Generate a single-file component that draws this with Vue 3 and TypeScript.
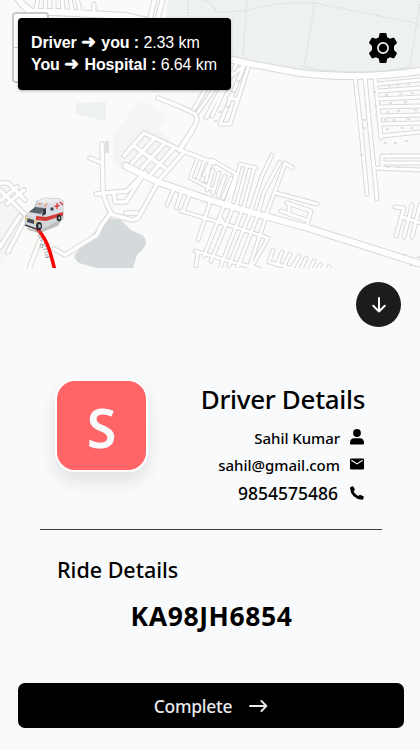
<script setup lang="ts">
interface Road { d: string; w: number }

const lane = (d: string, w = 4): Road => ({ d, w })

const roads: Road[] = [
  lane('M17-3Q25 9 33 12L56 12L125 16L156 23', 6),
  lane('M38-2L36 10M46-2L45 10M54-2L54 10M62-2L63 10M70-2L72 10M77-2L80 11M94 4V15', 3),
  lane('M155-2L145 40M163-2L152 40', 4),
  lane('M231 76L246 64M236 65L212 116M244 66L220 124L230 124L248 68M229 98L238 100M224 84L206 118M217 85L198 112M208 85L194 109', 3),
  lane('M158 98L181 107L195 114Q199 118 195 125L188 136L179 150', 3.5),
  lane('M355 77L361 130L367 194M365 77L370 130L377 199M375 77L381 138', 3),
  lane('M377 84L421 80M378 91L421 88M379 99L421 97M379 107L421 106M380 116L421 115M380 124L421 123M381 136L421 132M382 156H421M382 156V168M382 163H421M376 168L421 170', 3),
  lane('M124 156L144 133L180 150L214 163M132 163L154 139M142 168L164 144M151 174L173 149M160 179L184 152M134 146L165 168M180 150L193 130', 3.5),
  lane('M197 160L190 178L212 189M204 162L198 179M210 164L206 181', 2.5),
  lane('M102 144L103 190Q104 200 111 213L101 226L97 235L65 255L54 249M90 158L102 163M96 194L127 191L143 174M114 193L115 202L126 202L145 172M126 213L137 213', 3.5),
  lane('M158 182L141 213Q138 220 132 220L110 214', 3.5),
  lane('M174 188L167 205M182 191L176 208M190 194L183 211M181 211L232 226L268 238L251 268M204 222L198 240M195 251L232 262L260 269M198 252L196 266', 2.7),
  lane('M210 202L204 221M224 206L204 256M233 208L211 261M242 211L220 268M250 213L229 266M258 215L237 269M266 217L249 268M218 221L221 218L224 225', 2.7),
  lane('M204 175L212 160L236 174L226 203M213 170L207 190M219 173L213 193M225 176L218 196M231 178L223 198M240 165L229 205M240 164L256 168M247 166L236 207M254 169L243 209M272 155L262 176L251 210M280 162L264 192L258 213M285 163L293 168M285 164L266 215', 2.7),
  lane('M276 193L317 204M287 203L311 211L307 225M281 211L306 220M289 203V211', 3),
  lane('M273 250L269 262L294 269M282 252L277 265M290 254L284 266M299 256L292 268M306 258L301 269M314 261L310 269M320 265L317 271M329 267L326 272', 2.7),
  lane('M395 207L404 208L396 236M412 205L404 237M420 205L412 237M402 217L421 223', 3),
  lane('M0 183L8 183L25 200M0 201L17 187M7 204L24 190M0 190L39 228M20 216L0 247M25 219L8 252M40 240L29 269', 3.5),
  lane('M126 166L158 182L210 200L250 212L308 228L421 264', 6),
  lane('M220 57L246 63L300 73Q357 80 421 71', 6),
]

const trails: string[] = [
  'M203 0L210 3L218 12L246 11Q278 1 315 3L370 14L420 24',
  'M247 0L243 56M315 3L304 67Q357 77 410 67L420 3',
  'M188 0V19',
]

const buildings: [number, number][] = [
  [233, 70], [237, 80], [232, 91], [226, 106], [219, 111], [214, 120], [373, 91], [374, 105], [375, 114],
  [363, 119], [363, 127], [360, 154], [388, 85], [396, 84], [407, 83], [385, 94], [399, 93], [411, 92],
  [389, 102], [404, 101], [386, 111], [397, 110], [414, 109], [384, 119], [393, 119], [407, 118],
  [386, 128], [401, 127], [410, 127], [384, 142], [394, 142], [405, 140], [382, 153], [390, 153],
  [387, 166], [397, 166], [404, 254], [417, 256], [409, 264],
]

const distances = [
  { from: 'Driver', to: 'you :', value: '2.33 km' },
  { from: 'You', to: 'Hospital :', value: '6.64 km' },
]

const driver = { initial: 'S', name: 'Sahil Kumar', email: 'sahil@gmail.com', phone: '9854575486' }
const plate = 'KA98JH6854'
</script>

<template>
  <main class="screen">
    <section class="map">
      <svg class="tiles" width="420" height="268" viewBox="0 0 420 268">
        <path class="park" d="M168 0H420V69L360 75L300 70L232 57L163 45ZM76 103L106 102V121L76 114Z" />
        <path class="district" d="M140 100L167 116L158 130L178 147L150 180L113 165L113 136ZM0 180L28 215L0 268Z" />
        <path class="water" d="M101 225Q107 217 114 219Q122 219 125 224L131 230L142 235Q149 241 144 248L137 255L133 268H97L79 263Q72 257 76 253Z" />
        <path v-for="(t, i) in trails" :key="'t' + i" class="trail" :d="t" />
        <path v-for="(r, i) in roads" :key="'c' + i" class="casing" :d="r.d" :stroke-width="r.w + 2" />
        <path v-for="(r, i) in roads" :key="'f' + i" class="fill" :d="r.d" :stroke-width="r.w" />
        <rect v-for="(b, i) in buildings" :key="'b' + i" class="building" :x="b[0]" :y="b[1]" width="3" height="2" />
        <rect class="building" x="105" y="141" width="4" height="12" />
        <path id="street" d="M35 229Q44 246 47 268" fill="none" />
        <text class="street-name"><textPath href="#street">ourgha</textPath></text>
        <path class="route" d="M37 228Q46 239 49 249Q52 258 55 271" />
        <g class="ambulance">
          <path d="M27 228L40 231L62 219L58 226L40 233L28 230Z" fill="#777" opacity=".45" />
          <path d="M37 201L45 198L60 199L63 201V219L44 229L29 227L25 223L26 215L34 209Z" fill="#d3d6db" stroke="#9da0a6" stroke-width=".6" />
          <path d="M37 201L45 198L60 199L63 201L47 204Z" fill="#ececee" />
          <path d="M46 204L63 201V214L46 221Z" fill="#dadde3" />
          <path d="M35 207L44 208L41 214L29 212Z" fill="#59616b" />
          <path d="M43 209L46 208V214L42 216Z" fill="#303740" />
          <path d="M36 216L46 217L63 212V215.5L46 221L36 220Z" fill="#d43c36" />
          <path d="M27 213L36 215V217L27 215Z" fill="#e3e4e7" />
          <path d="M38 204H42M47 203L45 207" stroke="#e58a4c" stroke-width="1.1" />
          <path d="M57 203V209M54.5 206.5L59.5 205.5M60 202L63 205" stroke="#df3832" stroke-width="1.3" />
          <circle cx="52" cy="209" r="1.7" fill="#384454" />
          <path d="M27 218L34 220V224L27 222Z" fill="#454a52" />
          <path d="M25 218L28 219M34 222L37 221" stroke="#e9b64c" stroke-width="1.4" />
          <path d="M25 225L36 229" stroke="#3f444c" stroke-width="1.4" />
          <ellipse cx="39" cy="226" rx="3" ry="4" fill="#25292e" />
          <ellipse cx="39.5" cy="226" rx="1.4" ry="2" fill="#b7bbc1" />
          <ellipse cx="59" cy="218" rx="2.4" ry="3.2" fill="#25292e" />
          <ellipse cx="59.3" cy="218" rx="1" ry="1.5" fill="#b7bbc1" />
        </g>
      </svg>
      <div class="zoom-control"><span></span><span></span></div>
      <div class="distances">
        <div v-for="d in distances" :key="d.from"><b>{{ d.from }} <span class="arrow">➜</span> {{ d.to }}</b> {{ d.value }}</div>
      </div>
      <button class="settings" aria-label="Settings">
        <svg width="28" height="30" viewBox="0 0 28 30">
          <path d="M10.5.8Q10.7 0 11.5 0H16.5Q17.3 0 17.5.8L18.2 4.2L21 5.8L24.2 4.7Q25 4.4 25.5 5.2L27.8 9.2Q28.2 10 27.5 10.6L25 13V17L27.5 19.4Q28.2 20 27.8 20.8L25.5 24.8Q25 25.6 24.2 25.3L21 24.2L18.2 25.8L17.5 29.2Q17.3 30 16.5 30H11.5Q10.7 30 10.5 29.2L9.8 25.8L7 24.2L3.8 25.3Q3 25.6 2.5 24.8L.2 20.8Q-.2 20 .5 19.4L3 17V13L.5 10.6Q-.2 10 .2 9.2L2.5 5.2Q3 4.4 3.8 4.7L7 5.8L9.8 4.2Z" />
          <circle cx="14" cy="15" r="5.1" fill="none" stroke="#eef3f0" stroke-width="1.7" />
        </svg>
      </button>
    </section>

    <section class="sheet">
      <button class="collapse" aria-label="Collapse">
        <svg width="16" height="18" viewBox="0 0 16 18"><path d="M8 2V15.5M2.2 9.8L8 15.5L13.8 9.8" /></svg>
      </button>

      <div class="driver">
        <div class="avatar"><span>{{ driver.initial }}</span></div>
        <div class="details">
          <h1>Driver Details</h1>
          <div class="row name">
            <span>{{ driver.name }}</span>
            <svg width="14" height="16" viewBox="0 0 14 16"><circle cx="7" cy="4" r="3.9" /><path d="M0 14.3Q0 9.2 4.2 9.2H9.8Q14 9.2 14 14.3Q14 15.5 12.8 15.5H1.2Q0 15.5 0 14.3Z" /></svg>
          </div>
          <div class="row email">
            <span>{{ driver.email }}</span>
            <svg width="14" height="12" viewBox="0 0 14 12"><rect y=".5" width="14" height="11" rx="1.3" /><path d="M1.4 2.2L7 5.9L12.6 2.2" fill="none" stroke="#f9fafc" stroke-width="1.2" /></svg>
          </div>
          <div class="row phone">
            <span>{{ driver.phone }}</span>
            <svg width="14" height="14" viewBox="0 0 14 14"><path d="M.4 1.2L2.4.2Q3 0 3.3.6L4.8 3.3Q5 3.8 4.6 4.2L3.6 5.4Q5.2 8.4 8.3 10L9.5 9Q9.9 8.6 10.5 8.9L13.4 10.3Q14 10.6 13.8 11.3L13.1 13.2Q12.9 13.8 12.2 13.8Q1 12.6 0 2Q0 1.4.4 1.2Z" /></svg>
          </div>
        </div>
      </div>

      <div class="divider"></div>
      <h2>Ride Details</h2>
      <div class="plate"><span>{{ plate }}</span></div>

      <button class="complete">
        <span>Complete</span>
        <svg width="19" height="14" viewBox="0 0 19 14"><path d="M1 7H17.4M12.4 2L17.4 7L12.4 12" /></svg>
      </button>
    </section>
  </main>
</template>

<style>
body { margin: 0; background: #f9fafc; }
</style>

<style scoped>
* { box-sizing: border-box; }
.screen { width: 420px; height: 750px; overflow: hidden; background: #f9fafc; color: #000; font-family: "Noto Sans", "Open Sans", sans-serif; }
button { border: 0; padding: 0; font: inherit; }
svg { display: block; flex: none; }
.map { position: relative; height: 268px; overflow: hidden; background: #fafaf8; }
.park { fill: #edf2ee; }
.district { fill: #f5f5f3; }
.water { fill: #d4dadc; }
.trail { fill: none; stroke: #d8dad7; stroke-width: 1.3; stroke-dasharray: 1.5 1.5; }
.casing { fill: none; stroke: #d9d9d8; stroke-linecap: round; stroke-linejoin: round; }
.fill { fill: none; stroke: #fefefe; stroke-linecap: round; stroke-linejoin: round; }
.building { fill: #e0e0de; }
.street-name { font: 9px "Open Sans", sans-serif; fill: #8798a7; letter-spacing: .4px; }
.route { fill: none; stroke: #fe0000; stroke-width: 3.5; }
.zoom-control { position: absolute; left: 12px; top: 12px; width: 37px; height: 71px; border: 2px solid #c9c9c8; border-radius: 4px; background: #fff; display: grid; grid-template-rows: 1fr 1fr; }
.zoom-control span:first-child { border-bottom: 1px solid #ccc; }
.distances { position: absolute; left: 18px; top: 18px; width: 213px; height: 72px; padding: 14px 13px; border-radius: 4px; background: #000; color: #fff; font: 16px/22px "Liberation Sans", "DejaVu Sans", sans-serif; letter-spacing: -.1px; white-space: nowrap; box-shadow: 0 1px 3px rgb(0 0 0 / 30%); }
.arrow { display: inline-block; width: 16px; font-size: 18px; line-height: 20px; -webkit-text-stroke: .5px #fff; }
.settings { position: absolute; left: 369px; top: 33px; background: none; }
.sheet { height: 482px; display: flex; flex-direction: column; }
.collapse { display: grid; place-items: center; align-self: flex-end; width: 45px; height: 45px; margin: 14px 19px 0 0; border-radius: 50%; background: #1c1c1c; }
.collapse path { fill: none; stroke: #fff; stroke-width: 2; stroke-linecap: round; stroke-linejoin: round; }
.driver { display: flex; justify-content: space-between; height: 150px; margin: 52px 56px 0 55px; }
.avatar { display: grid; place-items: center; width: 93px; height: 93px; border: 2px solid #fff; border-radius: 20px; background: #ff6467; color: #f9fafc; font-size: 54px; font-weight: 600; box-shadow: 0 9px 17px rgb(0 0 0 / 10%); }
.avatar span { line-height: 60px; padding-top: 2px; }
.details { display: flex; flex-direction: column; align-items: flex-end; }
h1 { margin: 2px -1px 7px 0; font-size: 26px; line-height: 36px; font-weight: 500; letter-spacing: -.33px; white-space: nowrap; }
.row { display: flex; align-items: center; height: 27px; font-size: 15px; font-weight: 500; white-space: nowrap; }
.row svg { margin-left: 10px; }
.row.name span { letter-spacing: -.05px; }
.row.name svg { margin-top: -2px; }
.row.email svg { margin: -2px 0 0 10px; }
.row.phone { font-size: 17.5px; height: 29px; }
.row.phone svg { margin-left: 12px; }
.divider { width: 342px; height: 1px; margin-left: 40px; background: #3d3d3f; }
h2 { margin: 23px 0 0 57px; font-size: 21.5px; line-height: 34px; font-weight: 500; }
.plate { display: flex; justify-content: center; margin: 11px 0 0 3px; font-size: 26.5px; line-height: 36px; font-weight: 700; letter-spacing: .6px; }
.complete { display: flex; align-items: center; justify-content: center; gap: 17px; width: 386px; height: 45px; margin: 49px 0 0 18px; border-radius: 7px; background: #000; color: #e8e9eb; font-size: 17.5px; font-weight: 500; letter-spacing: -.25px; }
.complete path { fill: none; stroke: #e8e9eb; stroke-width: 1.8; stroke-linecap: round; stroke-linejoin: round; }
</style>
